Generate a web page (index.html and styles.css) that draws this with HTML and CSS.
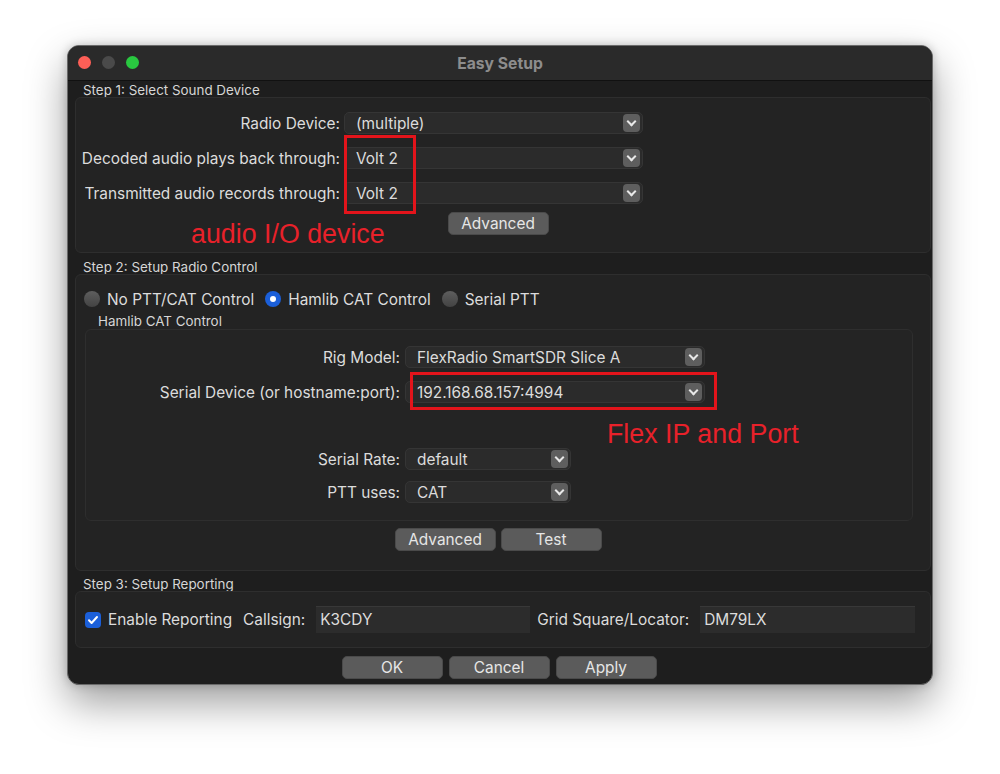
FILE: index.html
```html
<!DOCTYPE html>
<html lang="en">
<head>
    <meta charset="UTF-8">
    <title>Easy Setup</title>
    <link rel="stylesheet" href="styles.css">
</head>
<body>
    <div class="window">
        <div class="titlebar">
            <div class="lights">
                <span class="light red"></span>
                <span class="light grey"></span>
                <span class="light green"></span>
            </div>
            <div class="title">Easy Setup</div>
        </div>

        <div class="content">
            <!-- Step 1 -->
            <div class="step-label">Step 1: Select Sound Device</div>
            <div class="group group-sound">
                <div class="form-row">
                    <label class="lbl lbl-sound">Radio Device:</label>
                    <div class="combo combo-sound"><span>(multiple)</span><i class="arrow"></i></div>
                </div>
                <div class="form-row">
                    <label class="lbl lbl-sound">Decoded audio plays back through:</label>
                    <div class="combo combo-sound"><span>Volt 2</span><i class="arrow"></i></div>
                </div>
                <div class="form-row">
                    <label class="lbl lbl-sound">Transmitted audio records through:</label>
                    <div class="combo combo-sound"><span>Volt 2</span><i class="arrow"></i></div>
                </div>
                <div class="btn-row btn-row-sound">
                    <button class="btn">Advanced</button>
                </div>
                <div class="mark mark-audio"></div>
                <div class="note note-audio">audio I/O device</div>
            </div>

            <!-- Step 2 -->
            <div class="step-label">Step 2: Setup Radio Control</div>
            <div class="group group-radio">
                <div class="radio-row">
                    <span class="radio"></span><span class="radio-text">No PTT/CAT Control</span>
                    <span class="radio checked"></span><span class="radio-text">Hamlib CAT Control</span>
                    <span class="radio"></span><span class="radio-text">Serial PTT</span>
                </div>
                <div class="sub-label">Hamlib CAT Control</div>
                <div class="group inner">
                    <div class="form-row">
                        <label class="lbl lbl-cat">Rig Model:</label>
                        <div class="combo combo-wide"><span>FlexRadio SmartSDR Slice A</span><i class="arrow"></i></div>
                    </div>
                    <div class="form-row">
                        <label class="lbl lbl-cat">Serial Device (or hostname:port):</label>
                        <div class="combo combo-wide"><span>192.168.68.157:4994</span><i class="arrow"></i></div>
                    </div>
                    <div class="form-row row-gap">
                        <label class="lbl lbl-cat">Serial Rate:</label>
                        <div class="combo combo-short"><span>default</span><i class="arrow"></i></div>
                    </div>
                    <div class="form-row">
                        <label class="lbl lbl-cat">PTT uses:</label>
                        <div class="combo combo-short"><span>CAT</span><i class="arrow"></i></div>
                    </div>
                    <div class="mark mark-flex"></div>
                    <div class="note note-flex">Flex IP and Port</div>
                </div>
                <div class="btn-row btn-row-radio">
                    <button class="btn">Advanced</button>
                    <button class="btn">Test</button>
                </div>
            </div>

            <!-- Step 3 -->
            <div class="step-label">Step 3: Setup Reporting</div>
            <div class="group group-report">
                <span class="check">
                    <svg width="16" height="16" viewBox="0 0 16 16"><path d="M4 8.3l2.6 2.7L12 5" fill="none" stroke="#fff" stroke-width="2" stroke-linecap="round" stroke-linejoin="round"/></svg>
                </span>
                <span class="check-text">Enable Reporting</span>
                <span class="field-label">Callsign:</span>
                <div class="field field-call">K3CDY</div>
                <span class="field-label">Grid Square/Locator:</span>
                <div class="field field-grid">DM79LX</div>
            </div>

            <div class="btn-row btn-row-dialog">
                <button class="btn btn-dialog">OK</button>
                <button class="btn btn-dialog">Cancel</button>
                <button class="btn btn-dialog">Apply</button>
            </div>
        </div>
    </div>
</body>
</html>
```

FILE: styles.css
```css
body {
    margin: 0;
    background: #ffffff;
    font-family: Inter, "Noto Sans", sans-serif;
    color: #dcdcdc;
    width: 1000px;
    height: 774px;
    overflow: hidden;
}
.window {
    margin: 45px 0 0 67px;
    width: 866px;
    height: 640px;
    box-sizing: border-box;
    border: 1px solid #6a6a6a;
    border-radius: 12px;
    background: #1e1e1e;
    box-shadow: 0 18px 40px rgba(0, 0, 0, 0.38), 0 0 10px rgba(0, 0, 0, 0.2);
    overflow: hidden;
}
.titlebar {
    height: 34px;
    background: #2a2a2a;
    border-bottom: 1px solid #111;
    position: relative;
    display: flex;
    align-items: center;
    justify-content: center;
}
.lights {
    position: absolute;
    left: 10px;
    top: 10px;
    display: flex;
    gap: 11px;
}
.light {
    width: 13px;
    height: 13px;
    border-radius: 50%;
}
.light.red { background: #fe5f57; }
.light.grey { background: #4a4a4a; }
.light.green { background: #29c840; }
.title {
    font-size: 15.7px;
    font-weight: 700;
    color: #8d8d8d;
}
.content {
    padding: 0 1px 0 7px;
}
.step-label {
    font-size: 13.4px;
    color: #d6d6d6;
    padding-left: 8px;
    height: 16px;
    line-height: 18px;
}
.group {
    position: relative;
    background: #232323;
    border: 1px solid #2e2e2e;
    border-radius: 6px;
    box-sizing: border-box;
}
.group-sound {
    height: 156px;
    padding-top: 14px;
    margin-bottom: 5px;
}
.group-radio {
    height: 297px;
    padding-top: 14px;
    margin-bottom: 4px;
}
.group-report {
    height: 57px;
    display: flex;
    align-items: center;
    padding-left: 9px;
    margin-bottom: 8px;
}
.form-row {
    display: flex;
    align-items: center;
    height: 22px;
    margin-bottom: 13px;
    font-size: 15.4px;
}
.lbl {
    text-align: right;
    white-space: nowrap;
    flex: none;
}
.lbl-sound {
    width: 264px;
    margin-right: 4px;
}
.lbl-cat {
    width: 314px;
    margin-right: 5px;
}
.combo {
    height: 22px;
    box-sizing: border-box;
    background: #2b2b2b;
    border: 1px solid #353535;
    border-radius: 5px;
    display: flex;
    align-items: center;
    justify-content: space-between;
    padding: 0 2px 0 11px;
    flex: none;
}
.combo-sound { width: 299px; }
.combo-wide { width: 300px; }
.combo-short { width: 166px; }
.arrow {
    width: 17px;
    height: 18px;
    border-radius: 4px;
    background: #5e5e5e;
    position: relative;
}
.arrow::after {
    content: "";
    position: absolute;
    left: 5px;
    top: 4px;
    width: 5px;
    height: 5px;
    border-right: 2px solid #e8e8e8;
    border-bottom: 2px solid #e8e8e8;
    transform: rotate(45deg);
}
.btn-row {
    display: flex;
    justify-content: center;
    gap: 5px;
}
.btn-row-sound {
    margin-top: -5px;
    padding-right: 10px;
}
.btn-row-radio {
    margin-top: 7px;
    padding-right: 10px;
}
.btn-row-dialog {
    gap: 6px;
    padding-right: 8px;
}
.btn {
    width: 101px;
    height: 23px;
    border: 1px solid #4a4a4a;
    border-radius: 5px;
    background: #5b5b5b;
    color: #e6e6e6;
    font-family: Inter, "Noto Sans", sans-serif;
    font-size: 15.4px;
    padding: 0;
    line-height: 20px;
}
.btn-dialog {
    width: 101px;
}
.radio-row {
    display: flex;
    align-items: center;
    height: 20px;
    padding-left: 8px;
    font-size: 15.4px;
}
.radio {
    width: 16px;
    height: 16px;
    border-radius: 50%;
    background: linear-gradient(#5e5e5e, #434343);
    box-sizing: border-box;
    position: relative;
    margin-right: 7px;
}
.radio.checked {
    background: #1b5fd9;
}
.radio.checked::after {
    content: "";
    position: absolute;
    left: 5px;
    top: 5px;
    width: 6px;
    height: 6px;
    border-radius: 50%;
    background: #ffffff;
}
.radio-text {
    margin-right: 11px;
}
.sub-label {
    font-size: 13.4px;
    color: #d6d6d6;
    padding-left: 22px;
    margin-top: 5px;
    height: 15px;
    line-height: 15px;
}
.inner {
    margin: 0 17px 0 9px;
    height: 192px;
    padding-top: 16px;
    background: #242424;
}
.row-gap {
    margin-top: 45px;
    margin-bottom: 11px;
}
.check {
    width: 16px;
    height: 16px;
    border-radius: 4px;
    background: #1b5fd9;
    display: flex;
    margin-right: 7px;
}
.check-text {
    font-size: 15.4px;
    margin-right: 11px;
}
.field-label {
    font-size: 15.4px;
    margin-right: 11px;
}
.field {
    height: 27px;
    box-sizing: border-box;
    background: #2c2c2c;
    border-top: 1px solid #383838;
    font-size: 15.4px;
    line-height: 26px;
    padding-left: 4px;
    margin-right: 7px;
}
.field-call { width: 214px; }
.field-grid { width: 215px; }
.mark {
    position: absolute;
    border: 3px solid #e3141b;
    box-sizing: border-box;
}
.mark-audio {
    left: 268px;
    top: 37px;
    width: 72px;
    height: 79px;
}
.mark-flex {
    left: 324px;
    top: 42px;
    width: 307px;
    height: 38px;
}
.note {
    position: absolute;
    color: #e8212a;
    font-family: "Liberation Sans", Arial, sans-serif;
    font-size: 26.8px;
    white-space: nowrap;
}
.note-audio {
    left: 115px;
    top: 121px;
}
.note-flex {
    left: 521px;
    top: 89px;
}
```
